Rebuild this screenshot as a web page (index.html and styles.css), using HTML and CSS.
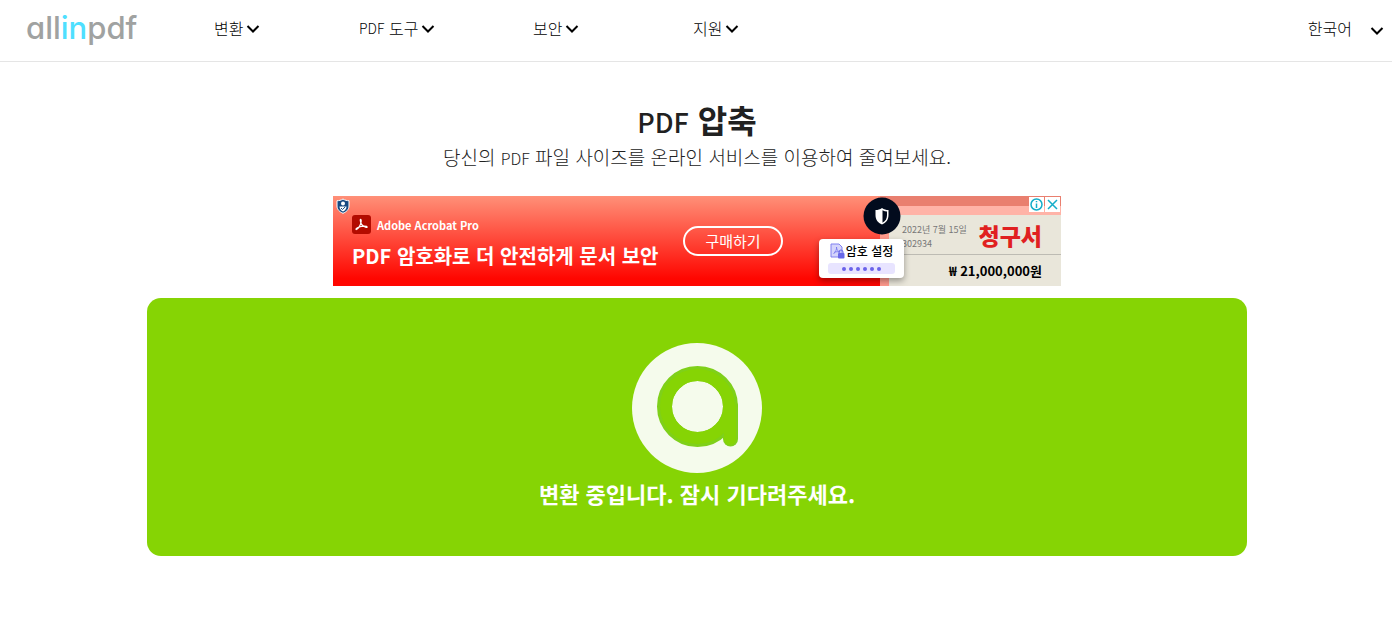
FILE: index.html
```html
<!DOCTYPE html>
<html lang="ko">
<head>
  <meta charset="UTF-8">
  <meta name="viewport" content="width=device-width, initial-scale=1">
  <title>PDF 압축 - allinpdf</title>
  <link rel="stylesheet" href="styles.css">
</head>
<body>
  <header>
    <a class="logo" href="#">all<span>in</span>pdf</a>
    <nav>
      <a href="#">변환<svg class="arrow" viewBox="0 0 14 14"><path d="M1.500 5L7 10.500 12.500 5"/></svg></a>
      <a href="#"><span class="en">PDF</span> 도구<svg class="arrow" viewBox="0 0 14 14"><path d="M1.500 5L7 10.500 12.500 5"/></svg></a>
      <a href="#">보안<svg class="arrow" viewBox="0 0 14 14"><path d="M1.500 5L7 10.500 12.500 5"/></svg></a>
      <a href="#">지원<svg class="arrow" viewBox="0 0 14 14"><path d="M1.500 5L7 10.500 12.500 5"/></svg></a>
    </nav>
    <button class="lang" type="button">한국어<svg class="arrow" viewBox="0 0 14 14"><path d="M1.500 7L7 12.500 12.500 7"/></svg></button>
  </header>

  <main>
    <h1><span class="en">PDF</span> 압축</h1>
    <p class="desc">당신의 <span class="en">PDF</span> 파일 사이즈를 온라인 서비스를 이용하여 줄여보세요.</p>

    <div class="ad">
      <svg class="ad-shield" viewBox="0 0 14 16">
        <path d="M7 1C5 2.300 3 2.700 1 2.700V8c0 3.500 2.500 5.800 6 7.300 3.500-1.500 6-3.800 6-7.300V2.700C11 2.700 9 2.300 7 1z" fill="#174a82" stroke="#fff"/>
        <circle cx="7" cy="5.500" r="2" fill="#fff"/>
        <path d="M3.500 8.500h7c0 2.500-1.500 4-3.500 5-2-1-3.500-2.500-3.500-5z" fill="#fff"/>
        <path d="M5 10l1.500 1.500L9.300 8.800" fill="none" stroke="#174a82"/>
      </svg>
      <div class="ad-copy">
        <div class="ad-brand">
          <svg viewBox="0 0 19 19">
            <rect width="19" height="19" rx="3" fill="#b30b00"/>
            <path d="M8.400 4.300c.9-.2 1 1.700.5 3.600-.7 2.500-2.700 5.800-4.600 6.700M4.300 14.600c-.9-.4.400-1.900 2.700-2.600 2.500-.8 5.600-1.200 7.500-.6 1 .5.700 1.300-.4 1-2.400-.6-4.800-2.900-5.500-5.200-.3-1.200-.6-2.600-.2-2.900" fill="none" stroke="#fff" stroke-width="1.200"/>
          </svg>
          Adobe Acrobat Pro
        </div>
        <div class="ad-title">PDF 암호화로 더 안전하게 문서 보안</div>
      </div>
      <a class="ad-buy" href="#">구매하기</a>
      <div class="invoice">
        <div class="invoice-top">
          <div class="invoice-date">2022년 7월 15일<br>302934</div>
          <strong>청구서</strong>
        </div>
        <div class="invoice-sum">₩ 21,000,000원</div>
      </div>
      <svg class="ad-lock" viewBox="0 0 38 38">
        <circle cx="19" cy="19" r="18.500" fill="#020b1d"/>
        <path d="M19 11c-2 1.500-4 2-6.500 2v5c0 5 2.500 7.500 6.500 9.500 4-2 6.500-4.500 6.500-9.500v-5c-2.500 0-4.500-.5-6.500-2z" fill="#fff"/>
        <path d="M19.500 13.200c1.500.9 3 1.300 4.500 1.400V18c0 3.800-1.500 6-4.500 7.700z" fill="#020b1d"/>
      </svg>
      <div class="password">
        <div class="password-label">
          <svg viewBox="0 0 15 16">
            <path d="M1 1h8l3 3v10H1z" fill="#d5d5fb" stroke="#8080f0"/>
            <path d="M6.500 4c.5 2-1 5-3 7M6.500 4c0 3 1.500 4.500 4 5M4 9.500c2-1 4-1 6-.5" fill="none" stroke="#7474ee" stroke-width=".8"/>
            <path d="M9 10V9a2 2 0 0 1 4 0v1" fill="none" stroke="#6868e8"/>
            <rect x="8" y="10" width="6.500" height="5.500" rx="1" fill="#6868e8"/>
          </svg>
          암호 설정
        </div>
        <div class="dots"><i></i><i></i><i></i><i></i><i></i><i></i></div>
      </div>
      <div class="ad-choices">
        <svg viewBox="0 0 15 15"><circle cx="7.500" cy="7.500" r="5.500"/><path d="M7.500 6.500V11M7.500 4v1.300"/></svg>
        <svg viewBox="0 0 15 15"><path d="M3 3l9 9M12 3l-9 9"/></svg>
      </div>
    </div>

    <div class="progress">
      <svg class="loader" viewBox="0 0 130 130">
        <circle cx="65" cy="65" r="65" fill="#f5fbec"/>
        <circle cx="65.500" cy="63.500" r="33" fill="none" stroke="#7fd01a" stroke-width="15"/>
        <path d="M98.500 63.500v32.500" fill="none" stroke="#7fd01a" stroke-width="15" stroke-linecap="round"/>
        <circle cx="65.500" cy="63.500" r="31.500" fill="none" stroke="#86d404" stroke-width="12"/>
        <path d="M98 63.500v32.500" fill="none" stroke="#86d404" stroke-width="12" stroke-linecap="round"/>
      </svg>
      <p>변환 중입니다. 잠시 기다려주세요.</p>
    </div>
  </main>
</body>
</html>
```

FILE: styles.css
```css
* {
  box-sizing: border-box;
}

body {
  margin: 0;
  font-family: 'Noto Sans CJK KR', sans-serif;
  font-weight: 300;
  background: #fff;
  color: #212121;
}

header {
  display: flex;
  align-items: center;
  height: 62px;
  padding: 0 8px 6px 26px;
  border-bottom: 1px solid #e5e5e5;
}

a {
  color: inherit;
  text-decoration: none;
}

.logo {
  width: 188px;
  font-family: Inter, sans-serif;
  font-feature-settings: 'cv11';
  font-size: 31px;
  font-weight: 500;
  line-height: 40px;
  color: #a0a2a1;
}

.logo span {
  color: #4fdfff;
}

nav {
  display: grid;
  grid-template-columns: 145px 174px 160px auto;
  font-size: 16px;
  line-height: 24px;
  color: #000;
}

nav a {
  display: flex;
  align-items: center;
  white-space: pre;
}

nav .en {
  font-size: 14px;
}

.arrow {
  width: 14px;
  height: 14px;
  margin-left: 3px;
  fill: none;
  stroke: #000;
  stroke-width: 2;
}

.lang {
  display: flex;
  align-items: center;
  margin-left: auto;
  padding: 0;
  border: 0;
  background: none;
  font: inherit;
  line-height: 24px;
  color: #000;
}

.lang .arrow {
  margin-left: 18px;
}

main {
  max-width: 1102px;
  margin: 0 auto;
  padding: 37px 0 0 2px;
}

h1 {
  margin: 0;
  font-size: 32px;
  font-weight: 700;
  line-height: 40px;
  text-align: center;
}

h1 .en {
  font-size: 27px;
  font-weight: 500;
}

.desc {
  margin: 0 0 23px;
  font-size: 19px;
  line-height: 30px;
  text-align: center;
}

.desc .en {
  font-size: 16px;
}

.ad {
  position: relative;
  display: flex;
  align-items: center;
  max-width: 728px;
  height: 90px;
  margin: 0 auto 12px;
  padding-left: 19px;
  overflow: hidden;
  background: linear-gradient(#ff9078, #ff0600 92%);
  color: #fff;
}

.ad-shield {
  position: absolute;
  top: 2px;
  left: 3px;
  width: 14px;
  height: 16px;
}

.ad-copy {
  width: 331px;
  padding-top: 4px;
}

.ad-brand {
  display: flex;
  align-items: center;
  gap: 6px;
  font-size: 11px;
  font-weight: 700;
  line-height: 20px;
}

.ad-brand svg {
  width: 19px;
  height: 19px;
}

.ad-title {
  margin-top: 5px;
  font-size: 20px;
  font-weight: 700;
  line-height: 32px;
  white-space: nowrap;
}

.ad-buy {
  width: 100px;
  border: 2px solid #fff;
  border-radius: 15px;
  font-size: 15px;
  font-weight: 400;
  line-height: 26px;
  text-align: center;
}

.invoice {
  align-self: flex-end;
  width: 181px;
  height: 71px;
  margin-left: auto;
  border-left: 9px solid #ff9a8c;
  background: #e9e6da;
  box-shadow: 0 -9px #ffb3a7, 0 -19px #e97f6f;
  color: #000;
}

.invoice-top {
  display: flex;
  justify-content: space-between;
  height: 40px;
  padding: 0 19px 0 13px;
  border-bottom: 1px solid #bdbbb3;
}

.invoice-date {
  padding-top: 8px;
  font-size: 9px;
  font-weight: 400;
  line-height: 14px;
  color: #777;
  white-space: nowrap;
}

.invoice-top strong {
  font-size: 23px;
  font-weight: 900;
  line-height: 40px;
  color: #e02020;
}

.invoice-sum {
  padding-right: 19px;
  font-size: 13px;
  font-weight: 700;
  line-height: 32px;
  text-align: right;
}

.ad-lock {
  position: absolute;
  top: 1px;
  right: 160px;
  width: 38px;
  height: 38px;
}

.password {
  position: absolute;
  top: 43px;
  right: 157px;
  width: 85px;
  height: 39px;
  padding: 2px 9px;
  border-radius: 4px;
  background: #fff;
  box-shadow: 0 3px 6px rgba(0, 0, 0, 0.35);
  color: #000;
}

.password-label {
  display: flex;
  align-items: center;
  justify-content: center;
  gap: 1px;
  font-size: 12px;
  font-weight: 500;
  line-height: 20px;
  white-space: nowrap;
}

.password-label svg {
  flex: none;
  width: 15px;
  height: 16px;
}

.dots {
  display: flex;
  align-items: center;
  justify-content: center;
  gap: 3px;
  height: 11px;
  margin-top: 2px;
  border-radius: 3px;
  background: #e8e4ff;
}

.dots i {
  width: 4px;
  height: 4px;
  border-radius: 50%;
  background: #6a62ea;
}

.ad-choices {
  position: absolute;
  top: 1px;
  right: 1px;
  display: flex;
  gap: 1px;
}

.ad-choices svg {
  width: 15px;
  height: 15px;
  background: #fff;
  fill: none;
  stroke: #14adc9;
  stroke-width: 1.5;
}

.progress {
  padding: 45px 20px;
  border-radius: 14px;
  background: #86d404;
  text-align: center;
  color: #fff;
}

.loader {
  display: block;
  width: 130px;
  height: 130px;
  margin: 0 auto;
}

.progress p {
  margin: 3px 0 0;
  font-size: 22px;
  font-weight: 700;
  line-height: 35px;
}
```
